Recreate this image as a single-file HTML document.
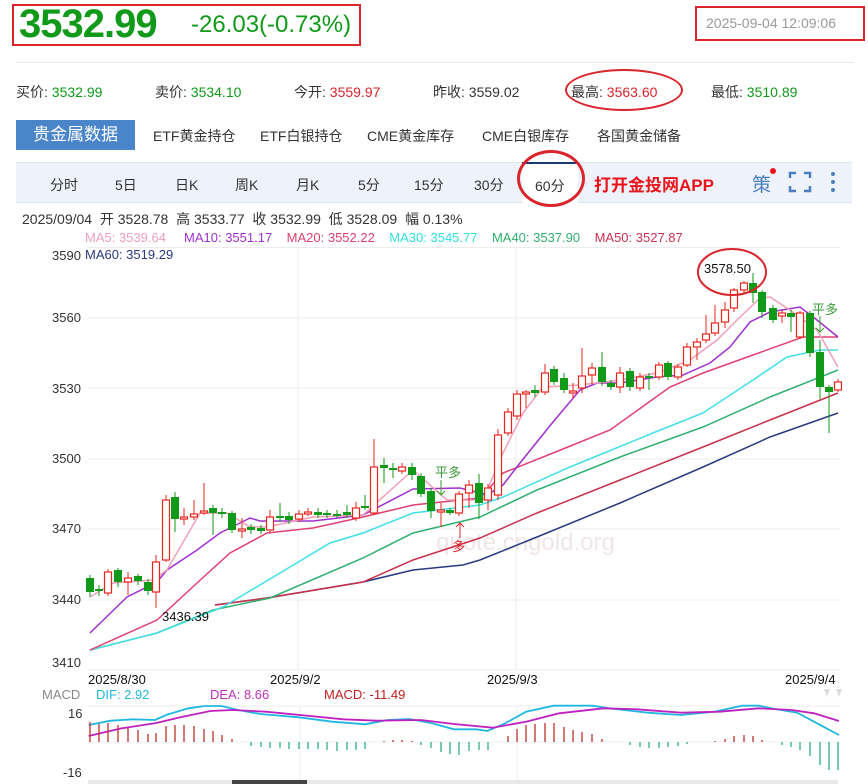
<!DOCTYPE html>
<html><head><meta charset="utf-8">
<style>
body{margin:0;width:868px;height:784px;background:#fff;font-family:"Liberation Sans","Noto Sans CJK SC",sans-serif;position:relative;overflow:hidden}
.a{position:absolute;white-space:nowrap}
</style></head><body>
<div class="a" style="left:12px;top:4px;width:345px;height:38px;border:2px solid #d9252b"></div>
<div class="a" style="left:19px;top:2px;font-size:40px;font-weight:bold;color:#119a1a;letter-spacing:-1px">3532.99</div>
<div class="a" style="left:191px;top:11px;font-size:24px;color:#119a1a">-26.03(-0.73%)</div>
<div class="a" style="left:695px;top:6px;width:166px;height:31px;border:2px solid #d9252b"></div>
<div class="a" style="left:706px;top:15px;font-size:14px;color:#999">2025-09-04 12:09:06</div>
<div class="a" style="left:16px;top:62px;width:838px;height:1px;background:#e6e6e6"></div>
<div class="a" style="left:16px;top:82px;font-size:14px;color:#333">买价: <span style="color:#119a1a">3532.99</span></div>
<div class="a" style="left:155px;top:82px;font-size:14px;color:#333">卖价: <span style="color:#119a1a">3534.10</span></div>
<div class="a" style="left:294px;top:82px;font-size:14px;color:#333">今开: <span style="color:#d9252b">3559.97</span></div>
<div class="a" style="left:433px;top:82px;font-size:14px;color:#333">昨收: 3559.02</div>
<div class="a" style="left:571px;top:82px;font-size:14px;color:#333">最高: <span style="color:#d9252b">3563.60</span></div>
<div class="a" style="left:711px;top:82px;font-size:14px;color:#333">最低: <span style="color:#119a1a">3510.89</span></div>
<div class="a" style="left:565px;top:69px;width:114px;height:38px;border:2px solid #d9252b;border-radius:50%"></div>
<div class="a" style="left:16px;top:120px;width:119px;height:30px;background:#4a84c9;color:#fff;font-size:17px;line-height:30px;text-align:center">贵金属数据</div>
<div class="a" style="left:153px;top:126px;font-size:14px;color:#333">ETF黄金持仓</div>
<div class="a" style="left:260px;top:126px;font-size:14px;color:#333">ETF白银持仓</div>
<div class="a" style="left:367px;top:126px;font-size:14px;color:#333">CME黄金库存</div>
<div class="a" style="left:482px;top:126px;font-size:14px;color:#333">CME白银库存</div>
<div class="a" style="left:597px;top:126px;font-size:14px;color:#333">各国黄金储备</div>
<div class="a" style="left:16px;top:162px;width:836px;height:39px;background:#eef3fb;border-top:1px solid #dde5f0;border-bottom:1px solid #dde5f0"></div>
<div class="a" style="left:50px;top:175px;font-size:14px;color:#333;word-spacing:0">分时</div>
<div class="a" style="left:115px;top:175px;font-size:14px;color:#333">5日</div>
<div class="a" style="left:175px;top:175px;font-size:14px;color:#333">日K</div>
<div class="a" style="left:235px;top:175px;font-size:14px;color:#333">周K</div>
<div class="a" style="left:296px;top:175px;font-size:14px;color:#333">月K</div>
<div class="a" style="left:358px;top:175px;font-size:14px;color:#333">5分</div>
<div class="a" style="left:414px;top:175px;font-size:14px;color:#333">15分</div>
<div class="a" style="left:474px;top:175px;font-size:14px;color:#333">30分</div>
<div class="a" style="left:522px;top:162px;width:56px;height:39px;background:#fff;border-top:2px solid #1c3a6e"></div>
<div class="a" style="left:535px;top:176px;font-size:14px;color:#333">60分</div>
<div class="a" style="left:517px;top:150px;width:62px;height:51px;border:3px solid #d9252b;border-radius:50%"></div>
<div class="a" style="left:594px;top:171px;font-size:17px;font-weight:bold;color:#e8141b">打开金投网APP</div>
<div class="a" style="left:752px;top:170px;font-size:19px;color:#4a7fc1">策</div>
<div class="a" style="left:770px;top:168px;width:6px;height:6px;border-radius:50%;background:#e8141b"></div>
<svg class="a" style="left:788px;top:171px" width="24" height="22"><path d="M2 7V2h6M16 2h6v5M22 15v5h-6M8 20H2v-5" fill="none" stroke="#4a7fc1" stroke-width="2.5"/></svg>
<svg class="a" style="left:829px;top:170px" width="8" height="24"><circle cx="4" cy="4" r="2" fill="#4a7fc1"/><circle cx="4" cy="12" r="2" fill="#4a7fc1"/><circle cx="4" cy="20" r="2" fill="#4a7fc1"/></svg>
<div class="a" style="left:22px;top:209px;font-size:14px;color:#333">2025/09/04 &nbsp;开 3528.78 &nbsp;高 3533.77 &nbsp;收 3532.99 &nbsp;低 3528.09 &nbsp;幅 0.13%</div>
<div class="a" style="left:85px;top:230px;font-size:13px"><span style="color:#f0a0b8">MA5: 3539.64</span>&nbsp;&nbsp;&nbsp;&nbsp;&nbsp;<span style="color:#a030d0">MA10: 3551.17</span>&nbsp;&nbsp;&nbsp;&nbsp;<span style="color:#e04070">MA20: 3552.22</span>&nbsp;&nbsp;&nbsp;&nbsp;<span style="color:#30e0e0">MA30: 3545.77</span>&nbsp;&nbsp;&nbsp;&nbsp;<span style="color:#30b070">MA40: 3537.90</span>&nbsp;&nbsp;&nbsp;&nbsp;<span style="color:#d03050">MA50: 3527.87</span></div>
<svg class="a" style="left:0;top:0" width="868" height="784" id="s">
<g stroke="#ececec" stroke-width="1">
<line x1="88" y1="247.5" x2="840" y2="247.5"/>
<line x1="88" y1="318" x2="840" y2="318"/><line x1="88" y1="388" x2="840" y2="388"/><line x1="88" y1="459" x2="840" y2="459"/><line x1="88" y1="529" x2="840" y2="529"/><line x1="88" y1="600" x2="840" y2="600"/><line x1="88" y1="670" x2="840" y2="670"/>
<line x1="298" y1="248" x2="298" y2="670"/><line x1="516" y1="248" x2="516" y2="670"/>
<line x1="88" y1="706" x2="840" y2="706"/><line x1="300" y1="706" x2="300" y2="780"/><line x1="517" y1="706" x2="517" y2="780"/>
</g>
<line x1="88" y1="742" x2="840" y2="742" stroke="#f2f2f2"/>
<text x="436" y="550" font-size="24" fill="#f1e6e6" font-family="Liberation Sans">quote.cngold.org</text>
<g font-size="13" fill="#333" font-family="Liberation Sans">
<text x="52" y="260">3590</text><text x="52" y="322">3560</text><text x="52" y="393">3530</text><text x="52" y="463">3500</text><text x="52" y="533">3470</text><text x="52" y="604">3440</text><text x="52" y="667">3410</text>
<text x="85" y="259" fill="#2a3a80">MA60: 3519.29</text>
</g>
<g id="ma" fill="none" stroke-width="1.5"></g>
<g id="cd"></g>
<g id="mc"></g>
<g font-family="Liberation Sans" font-size="13">
<text x="162" y="621" fill="#111">3436.39</text>
<text x="704" y="273" fill="#111">3578.50</text>
<text x="88" y="684" fill="#111">2025/8/30</text><text x="270" y="684" fill="#111">2025/9/2</text><text x="487" y="684" fill="#111">2025/9/3</text><text x="785" y="684" fill="#111">2025/9/4</text>
<text x="42" y="699" fill="#888">MACD</text><text x="96" y="699" fill="#20b8d8">DIF: 2.92</text><text x="210" y="699" fill="#c030c0">DEA: 8.66</text><text x="324" y="699" fill="#c02020">MACD: -11.49</text>
<text x="68" y="718" fill="#333">16</text><text x="63" y="777" fill="#333">-16</text>
</g>
<g font-family="Liberation Sans,Noto Sans CJK SC,sans-serif" font-size="13">
<text x="435" y="477" fill="#3a9a3a">平多</text><text x="812" y="314" fill="#3a9a3a">平多</text>
<text x="452" y="551" fill="#d9252b">多</text>
</g>
<path d="M441 480v15M437 491l4 4 4-4M820 316v16M816 328l4 4 4-4" stroke="#3a9a3a" fill="none"/>
<path d="M460 538v-15M456 527l4-4 4 4" stroke="#d9252b" fill="none"/>
<ellipse cx="732" cy="272" rx="34" ry="23" fill="none" stroke="#d9252b" stroke-width="2"/>
<path d="M824 689l3 8 3-8zM836 689l3 8 3-8z" fill="#ddd"/>
<rect x="88" y="780" width="750" height="4" fill="#e8e8e8"/><rect x="232" y="780" width="75" height="4" fill="#444"/>
</svg>
<script>
var NS="http://www.w3.org/2000/svg";
function el(p,t,a){var e=document.createElementNS(NS,t);for(var k in a)e.setAttribute(k,a[k]);p.appendChild(e);return e}
var ma=document.getElementById("ma");
var L=[
["#2a3a80",[[215,605],[267,598],[363,582],[413,570],[463,565],[480,560],[537,537],[620,503],[703,467],[770,437],[838,413]]],
["#c8304c",[[215,605],[267,598],[363,582],[413,560],[480,538],[537,513],[620,480],[703,447],[770,420],[838,393]]],
["#30b070",[[90,650],[157,633],[213,610],[270,598],[363,558],[413,533],[480,517],[537,490],[620,457],[703,427],[770,397],[838,370]]],
["#40e0e8",[[90,650],[157,633],[223,607],[280,573],[330,543],[363,533],[413,513],[480,505],[503,497],[570,467],[653,433],[703,413],[753,380],[787,357],[820,350],[838,350]]],
["#e04070",[[90,650],[157,620],[197,583],[230,553],[267,533],[313,528],[363,517],[413,505],[480,498],[503,473],[553,453],[610,430],[670,387],[703,373],[753,355],[803,337],[838,337]]],
["#a030d0",[[90,633],[127,597],[157,582],[167,570],[197,550],[220,533],[250,518],[260,521],[313,521],[363,515],[413,489],[460,488],[480,493],[487,495],[503,485],[520,463],[553,422],[580,390],[597,383],[620,383],[657,377],[683,375],[710,363],[730,347],[750,322],[770,312],[800,307],[817,320],[838,337]]],
["#f0a0b8",[[90,597],[113,583],[153,580],[167,570],[200,513],[227,513],[250,527],[267,527],[313,517],[363,515],[413,470],[447,500],[483,500],[503,453],[523,413],[543,387],[580,385],[620,380],[657,373],[690,360],[717,340],[737,320],[760,298],[770,297],[790,310],[817,330],[838,367]]]];
L.forEach(function(l){el(ma,"polyline",{points:l[1].map(function(p){return p.join(",")}).join(" "),stroke:l[0]})});
// candles: x, top, bottom, wickTop, wickBot, red?
var C=[[90,578,592,575,597,0],[99,589,591,585,596,0],[108,572,593,569,596,1],[118,570,582,568,587,0],[128,578,582,572,595,1],[138,576,581,574,585,0],[148,582,591,579,595,0],[156,562,592,555,608,1],[166,500,560,495,562,1],[175,497,519,492,532,0],[184,517,519,508,525,1],[194,514,517,500,520,1],[204,511,513,483,515,1],[213,508,513,505,535,0],[222,512,514,508,518,0],[232,513,530,511,533,0],[242,529,531,518,538,1],[251,527,530,524,534,0],[261,528,531,525,534,0],[270,517,530,510,532,1],[280,516,518,503,522,0],[289,516,520,512,524,0],[299,514,519,510,522,1],[308,512,514,508,516,1],[318,512,515,508,518,0],[327,513,515,510,518,0],[337,514,516,510,518,0],[347,512,515,505,518,0],[356,508,518,502,521,1],[365,506,508,495,510,0],[374,467,513,439,515,1],[384,465,468,458,483,0],[393,468,470,463,478,0],[402,467,471,463,474,1],[412,467,475,463,480,0],[421,476,494,473,497,0],[431,491,511,488,518,0],[441,510,512,503,527,1],[450,510,513,508,515,0],[459,494,513,491,516,1],[469,485,493,480,508,1],[479,483,503,474,519,0],[488,488,500,484,510,1],[498,435,495,429,500,1],[508,412,433,408,436,1],[517,394,416,390,420,1],[526,392,394,390,408,1],[535,390,393,385,397,0],[545,373,392,364,395,1],[554,369,382,366,385,0],[564,378,390,373,393,0],[573,391,393,383,398,1],[582,376,388,348,393,1],[592,368,375,363,384,1],[602,367,382,352,386,0],[611,383,387,380,390,0],[620,373,387,367,393,1],[630,371,387,368,391,0],[640,377,388,373,391,1],[649,376,378,373,390,0],[659,365,377,362,380,1],[668,363,377,361,380,0],[678,367,377,364,380,1],[687,347,365,343,367,1],[697,342,347,338,360,1],[706,334,340,315,343,1],[715,323,333,305,336,1],[725,310,322,302,328,1],[734,290,308,288,312,1],[744,283,290,281,294,1],[753,283,293,273,303,0],[762,292,312,290,318,0],[773,308,320,305,323,0],[782,313,316,310,323,1],[791,313,317,310,332,0],[800,313,337,311,339,1],[810,313,353,311,357,0],[820,352,387,340,399,0],[829,387,392,385,433,0],[838,382,390,379,392,1]];
var cd=document.getElementById("cd");
C.forEach(function(c){var col=c[5]?"#e8251d":"#119a1a";
el(cd,"line",{x1:c[0],x2:c[0],y1:c[3],y2:c[4],stroke:col});
var h=Math.max(c[2]-c[1],1.5);
if(c[5])el(cd,"rect",{x:c[0]-3.5,y:c[1],width:7,height:h,fill:"#fff",stroke:col,"stroke-width":1.2});
else el(cd,"rect",{x:c[0]-4,y:c[1],width:8,height:h,fill:col});});
var mc=document.getElementById("mc");
function pts(a){return a.map(function(p){return (p[0]/1.806).toFixed(1)+","+(640+p[1]/3).toFixed(1)}).join(" ")}
el(mc,"polyline",{points:pts([[160,255],[200,242],[240,238],[280,240],[300,225],[340,205],[370,198],[400,198],[430,210],[470,222],[540,232],[600,245],[660,253],[700,240],[740,237],[780,250],[820,268],[860,268],[880,273],[910,252],[950,215],[1000,197],[1070,197],[1100,205],[1170,218],[1230,225],[1290,215],[1340,197],[1370,197],[1400,207],[1440,218],[1470,245],[1515,285]]),fill:"none",stroke:"#20b8e0","stroke-width":1.8});
el(mc,"polyline",{points:pts([[160,288],[220,265],[280,250],[330,230],[380,213],[420,210],[480,215],[560,228],[620,238],[680,242],[760,240],[820,252],[890,263],[950,245],[1010,220],[1090,205],[1150,208],[1230,218],[1300,215],[1370,205],[1430,210],[1470,220],[1515,243]]),fill:"none",stroke:"#c020c0","stroke-width":1.8});
var H={};
function set(s,a){a.forEach(function(v,i){H[s+i]=v})}
set(0,[20,18,19,17,14,12,8,9,16,17,17,16,13,11,7,3]);
set(17,[-4,-5,-6,-6,-7,-7,-7,-7,-8,-9,-8,-8,-7]);
set(31,[1,2,2,1]);
set(35,[-3,-6,-10,-12,-13,-9,-8,-8]);
set(44,[6,13,17,18,19,19,15,12,10,8,3]);
set(57,[-3,-5,-6,-6,-5,-4,-2]);
set(66,[1,3,6,7,6,2]);
set(73,[-3,-5,-8,-14,-23,-28,-28]);
for(var i=0;i<80;i++){var v=H[i];if(!v)continue;var x=C[i][0];
el(mc,"line",{x1:x,x2:x,y1:742,y2:742-v,stroke:v>0?"#c0302a":"#30b080","stroke-width":1.3});}
</script>
</body></html>
